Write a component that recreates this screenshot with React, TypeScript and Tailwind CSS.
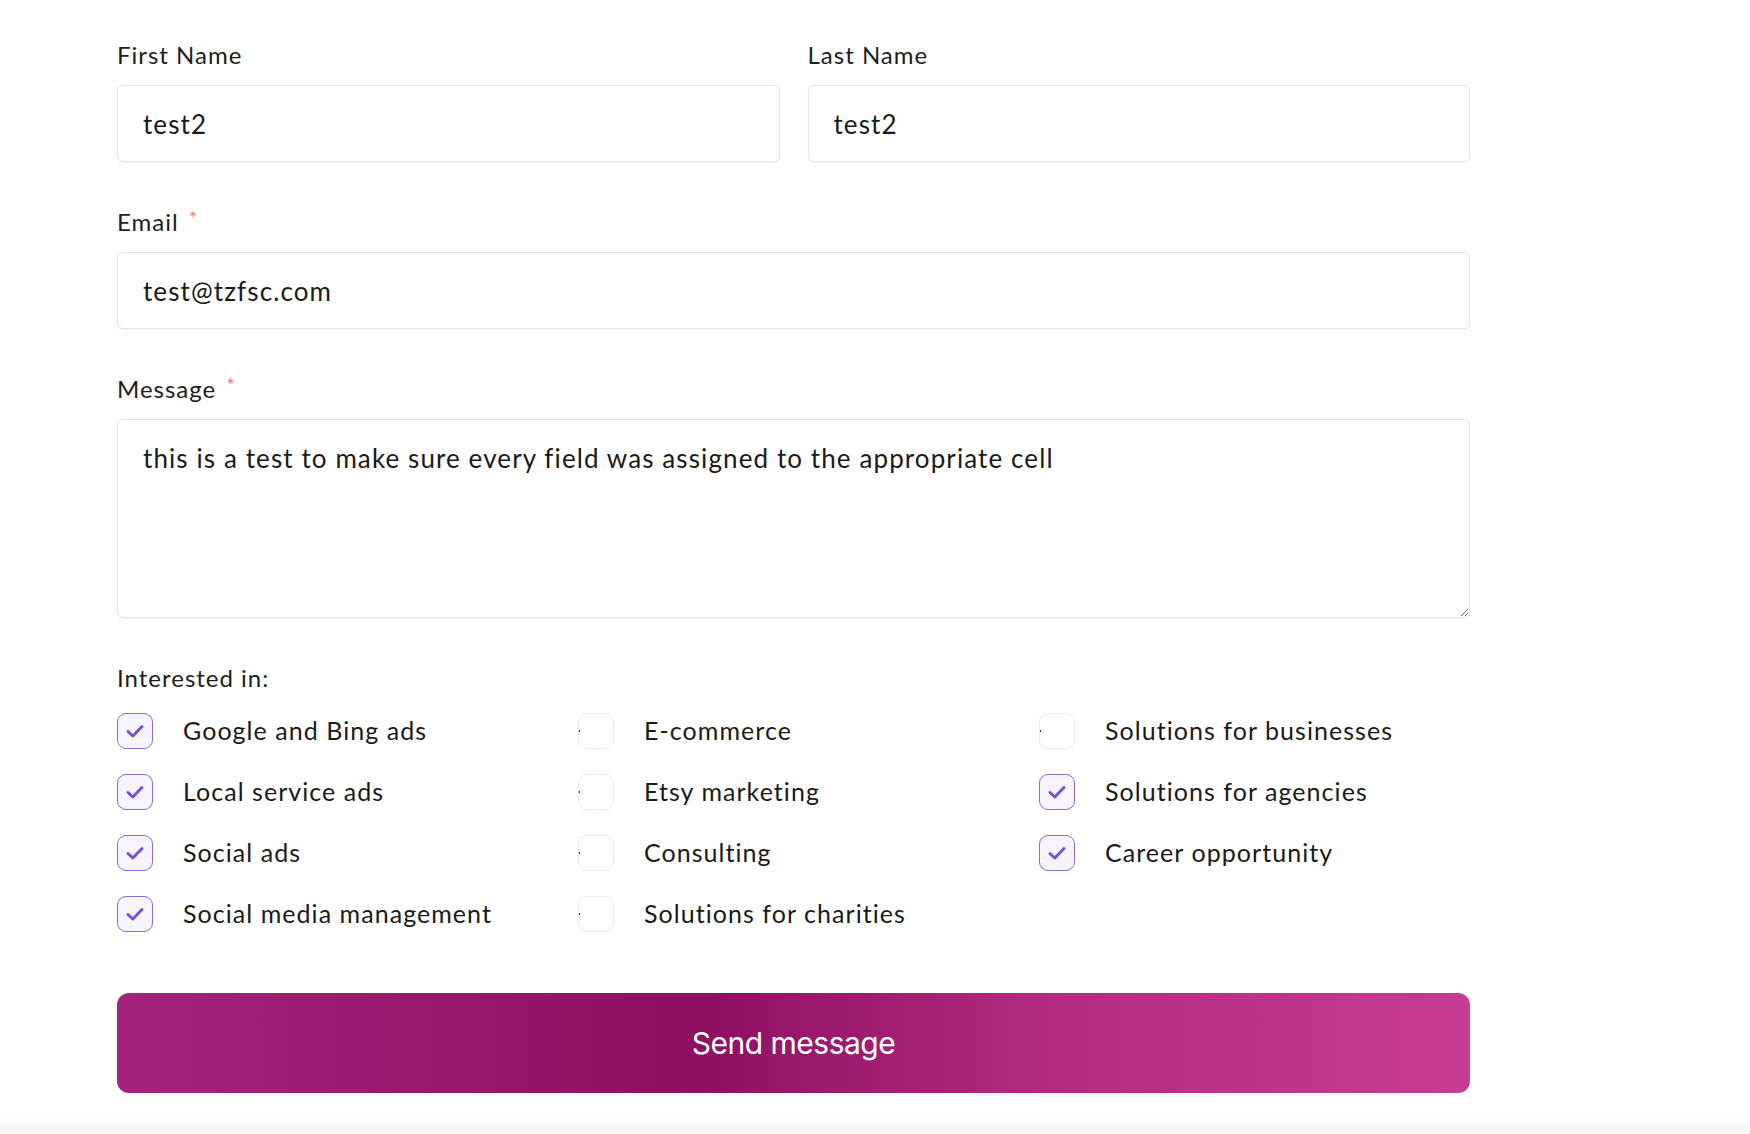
import React from "react";

const items: { label: string; checked: boolean }[][] = [
  [
    { label: "Google and Bing ads", checked: true },
    { label: "Local service ads", checked: true },
    { label: "Social ads", checked: true },
    { label: "Social media management", checked: true },
  ],
  [
    { label: "E-commerce", checked: false },
    { label: "Etsy marketing", checked: false },
    { label: "Consulting", checked: false },
    { label: "Solutions for charities", checked: false },
  ],
  [
    { label: "Solutions for businesses", checked: false },
    { label: "Solutions for agencies", checked: true },
    { label: "Career opportunity", checked: true },
  ],
];

function Box({ checked }: { checked: boolean }) {
  if (checked) {
    return (
      <div className="relative w-[36px] h-[36px] rounded-[9px] border-[1.5px] border-[#8a6cd8] bg-[#f7f3ff] flex items-center justify-center shrink-0">
        <svg width="24" height="24" viewBox="0 0 24 24" fill="none">
          <path d="M5 12.5 L9.8 17 L19 7.5" stroke="#7a4fd4" strokeWidth="3" strokeLinecap="round" strokeLinejoin="round" />
        </svg>
      </div>
    );
  }
  return (
    <div className="relative w-[36px] h-[36px] rounded-[9px] border border-[#ececec] bg-white shrink-0">
      <span className="absolute left-[0px] top-[16px] w-[1px] h-[2px] bg-[#333]" />
    </div>
  );
}

function Label({ text, required }: { text: string; required?: boolean }) {
  return (
    <div className="h-[30px] leading-[30px] mb-[15px] text-[24px] tracking-[1px] text-[#1d1d1f] flex">
      <span>{text}</span>
      {required && <span className="ml-[10px] text-[#ef7b7b] text-[20px] leading-[20px]">*</span>}
    </div>
  );
}

const inputCls =
  "w-full h-[77px] rounded-[6px] border border-[#e4e4ea] bg-white shadow-[0_1px_2px_rgba(0,0,0,0.05)] px-[25px] text-[26px] tracking-[1.1px] text-[#1a1a1a] outline-none";

export default function App() {
  return (
    <div className="min-h-[1134px] bg-white flex flex-col" style={{ fontFamily: "Lato, 'Noto Sans', sans-serif" }}>
      <div className="pl-[117px] pt-[40px]">
        <div className="w-[1353px]">
          <div className="grid grid-cols-2 gap-x-[28px] mb-[45px]">
            <div>
              <Label text="First Name" />
              <input className={inputCls} defaultValue="test2" />
            </div>
            <div>
              <Label text="Last Name" />
              <input className={inputCls} defaultValue="test2" />
            </div>
          </div>
          <div className="mb-[45px]">
            <Label text="Email" required />
            <input className={inputCls} defaultValue="test@tzfsc.com" />
          </div>
          <div className="mb-[45px]">
            <Label text="Message" required />
            <textarea
              className="block w-full h-[199px] rounded-[6px] border border-[#e4e4ea] bg-white shadow-[0_1px_2px_rgba(0,0,0,0.05)] px-[25px] pt-[22px] text-[26px] tracking-[1.1px] leading-[32px] text-[#1a1a1a] outline-none"
              defaultValue="this is a test to make sure every field was assigned to the appropriate cell"
            />
          </div>
          <div className="h-[30px] leading-[30px] text-[24px] tracking-[1px] text-[#1d1d1f] mb-[20px]">Interested in:</div>
          <div className="grid grid-cols-3 gap-x-[30px]">
            {items.map((col, ci) => (
              <div key={ci} className="flex flex-col gap-y-[25px]">
                {col.map((it) => (
                  <div key={it.label} className="flex items-center h-[36px]">
                    <Box checked={it.checked} />
                    <span className="ml-[30px] text-[25px] tracking-[1.05px] text-[#1a1a1a] whitespace-nowrap">{it.label}</span>
                  </div>
                ))}
              </div>
            ))}
          </div>
          <button
            className="mt-[61px] w-full h-[100px] rounded-[12px] bg-[linear-gradient(90deg,#a2247d_0%,#8e1062_43%,#b42d82_70%,#c63c93_100%)] text-white text-[30px] tracking-[-0.5px] flex items-center justify-center"
            style={{ fontFamily: "Inter, sans-serif" }}
          >
            Send message
          </button>
        </div>
      </div>
      <div className="mt-[18px] flex-1 bg-[linear-gradient(180deg,#ffffff_0%,#f6f6f6_100%)]" />
    </div>
  );
}
